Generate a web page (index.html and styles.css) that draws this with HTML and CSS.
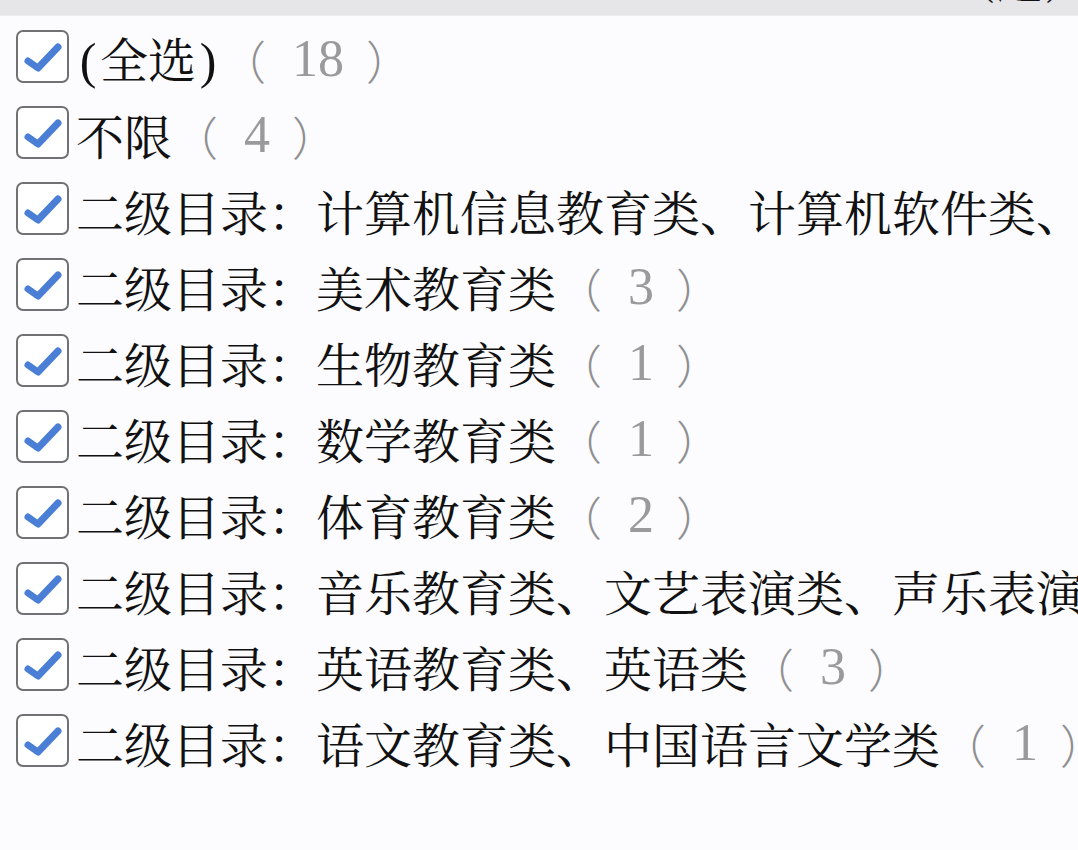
FILE: index.html
```html
<!DOCTYPE html>
<html lang="zh-CN">
<head>
<meta charset="utf-8">
<title>筛选</title>
<link rel="stylesheet" href="styles.css">
</head>
<body>
<div class="topbar"><span class="topbar-text">（选）</span></div>
<div class="list">
  <div class="row"><span class="cb"><svg viewBox="0 0 53 53" width="53" height="53"><rect x="1" y="1" width="51" height="51" rx="6"/><path d="M12 31 L22 38 L42 17"/></svg></span><span class="label"><span class="half">(</span>全选<span class="half">)</span></span><span class="count"><span class="p">（</span><span class="n">18</span><span class="p">）</span></span></div>
  <div class="row"><span class="cb"><svg viewBox="0 0 53 53" width="53" height="53"><rect x="1" y="1" width="51" height="51" rx="6"/><path d="M12 31 L22 38 L42 17"/></svg></span><span class="label">不限</span><span class="count"><span class="p">（</span><span class="n">4</span><span class="p">）</span></span></div>
  <div class="row"><span class="cb"><svg viewBox="0 0 53 53" width="53" height="53"><rect x="1" y="1" width="51" height="51" rx="6"/><path d="M12 31 L22 38 L42 17"/></svg></span><span class="label">二级目录：计算机信息教育类、计算机软件类、计算机网络类</span></div>
  <div class="row"><span class="cb"><svg viewBox="0 0 53 53" width="53" height="53"><rect x="1" y="1" width="51" height="51" rx="6"/><path d="M12 31 L22 38 L42 17"/></svg></span><span class="label">二级目录：美术教育类</span><span class="count"><span class="p">（</span><span class="n">3</span><span class="p">）</span></span></div>
  <div class="row"><span class="cb"><svg viewBox="0 0 53 53" width="53" height="53"><rect x="1" y="1" width="51" height="51" rx="6"/><path d="M12 31 L22 38 L42 17"/></svg></span><span class="label">二级目录：生物教育类</span><span class="count"><span class="p">（</span><span class="n">1</span><span class="p">）</span></span></div>
  <div class="row"><span class="cb"><svg viewBox="0 0 53 53" width="53" height="53"><rect x="1" y="1" width="51" height="51" rx="6"/><path d="M12 31 L22 38 L42 17"/></svg></span><span class="label">二级目录：数学教育类</span><span class="count"><span class="p">（</span><span class="n">1</span><span class="p">）</span></span></div>
  <div class="row"><span class="cb"><svg viewBox="0 0 53 53" width="53" height="53"><rect x="1" y="1" width="51" height="51" rx="6"/><path d="M12 31 L22 38 L42 17"/></svg></span><span class="label">二级目录：体育教育类</span><span class="count"><span class="p">（</span><span class="n">2</span><span class="p">）</span></span></div>
  <div class="row"><span class="cb"><svg viewBox="0 0 53 53" width="53" height="53"><rect x="1" y="1" width="51" height="51" rx="6"/><path d="M12 31 L22 38 L42 17"/></svg></span><span class="label">二级目录：音乐教育类、文艺表演类、声乐表演类</span></div>
  <div class="row"><span class="cb"><svg viewBox="0 0 53 53" width="53" height="53"><rect x="1" y="1" width="51" height="51" rx="6"/><path d="M12 31 L22 38 L42 17"/></svg></span><span class="label">二级目录：英语教育类、英语类</span><span class="count"><span class="p">（</span><span class="n">3</span><span class="p">）</span></span></div>
  <div class="row"><span class="cb"><svg viewBox="0 0 53 53" width="53" height="53"><rect x="1" y="1" width="51" height="51" rx="6"/><path d="M12 31 L22 38 L42 17"/></svg></span><span class="label">二级目录：语文教育类、中国语言文学类</span><span class="count"><span class="p">（</span><span class="n">1</span><span class="p">）</span></span></div>
</div>
</body>
</html>
```
FILE: styles.css
```css
html, body {
  margin: 0;
  padding: 0;
  background: #fcfbfd;
  width: 1078px;
  height: 850px;
  overflow: hidden;
}
.topbar {
  height: 15px;
  background: #e6e6e8;
  border-bottom: 1px solid #ececee;
  overflow: hidden;
  position: relative;
}
.topbar-text {
  position: absolute;
  right: -14px;
  top: -46px;
  font-family: "Noto Serif CJK SC", "Noto Sans CJK SC", serif;
  font-size: 48px;
  line-height: 48px;
  color: #111;
}
.list {
  padding: 5px 0 0 16px;
  overflow: hidden;
  white-space: nowrap;
}
.row {
  display: flex;
  align-items: center;
  height: 76px;
  overflow: hidden;
}
.cb {
  flex: 0 0 53px;
  width: 53px;
  height: 53px;
  margin-right: 7px;
  margin-top: -5px;
}
.cb svg {
  display: block;
}
.cb rect {
  fill: #ffffff;
  stroke: #717174;
  stroke-width: 2;
}
.cb path {
  fill: none;
  stroke: #4a7fd5;
  stroke-width: 7;
  stroke-linecap: round;
  stroke-linejoin: round;
}
.label {
  font-family: "Noto Serif CJK SC", "Noto Sans CJK SC", serif;
  font-size: 48px;
  line-height: 56px;
  color: #111111;
  flex: 0 0 auto;
}
.half {
  display: inline-block;
  width: 24px;
  text-align: center;
  font-family: "Liberation Serif", "DejaVu Serif", serif;
  font-size: 50px;
}
.count {
  display: flex;
  align-items: center;
  font-family: "Noto Sans CJK SC", sans-serif;
  font-weight: 300;
  font-size: 46px;
  line-height: 56px;
  color: #909092;
  flex: 0 0 auto;
}
.count .n {
  font-family: "Liberation Serif", "DejaVu Serif", serif;
  font-weight: 400;
  font-size: 52px;
  margin: 0 22px 0 26px;
  color: #9a9a9c;
}
```
